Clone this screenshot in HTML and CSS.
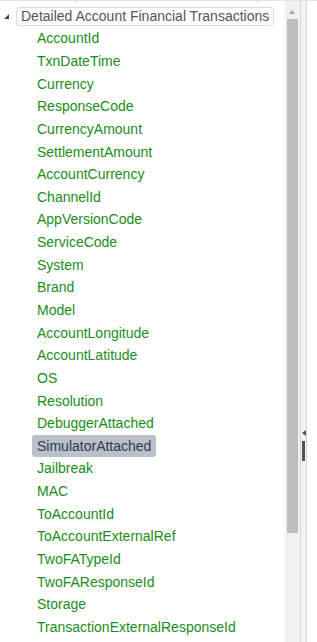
FILE: index.html
```html
<!DOCTYPE html>
<html>
<head>
    <meta http-equiv="Content-Type" content="text/html; charset=utf-8"/>
    <title>Fields</title>
    <link rel="stylesheet" href="styles.css">
</head>
<body>
<div class="frame">
    <div class="header"><span class="tick tick-a"></span><span class="tick tick-b"></span></div>
    <div class="main">
        <div class="tree">
            <div class="root">
                <span class="toggle"></span>
                <span class="root-label">Detailed Account Financial Transactions</span>
            </div>
            <ul class="fields">
                <li><span>AccountId</span></li>
                <li><span>TxnDateTime</span></li>
                <li><span>Currency</span></li>
                <li><span>ResponseCode</span></li>
                <li><span>CurrencyAmount</span></li>
                <li><span>SettlementAmount</span></li>
                <li><span>AccountCurrency</span></li>
                <li><span>ChannelId</span></li>
                <li><span>AppVersionCode</span></li>
                <li><span>ServiceCode</span></li>
                <li><span>System</span></li>
                <li><span>Brand</span></li>
                <li><span>Model</span></li>
                <li><span>AccountLongitude</span></li>
                <li><span>AccountLatitude</span></li>
                <li><span>OS</span></li>
                <li><span>Resolution</span></li>
                <li><span>DebuggerAttached</span></li>
                <li class="selected"><span>SimulatorAttached</span></li>
                <li><span>Jailbreak</span></li>
                <li><span>MAC</span></li>
                <li><span>ToAccountId</span></li>
                <li><span>ToAccountExternalRef</span></li>
                <li><span>TwoFATypeId</span></li>
                <li><span>TwoFAResponseId</span></li>
                <li><span>Storage</span></li>
                <li><span>TransactionExternalResponseId</span></li>
            </ul>
        </div>
        <div class="scrollbar">
            <div class="arrow-up"></div>
            <div class="thumb"></div>
        </div>
        <div class="splitter">
            <div class="collapse"></div>
            <div class="grip"></div>
        </div>
        <div class="rest"></div>
    </div>
</div>
</body>
</html>
```

FILE: styles.css
```css
html, body {
    margin: 0;
    padding: 0;
    background-color: #fff;
}
body {
    width: 317px;
    height: 642px;
    overflow: hidden;
    font-family: "Liberation Sans", Arial, sans-serif;
    font-size: 14px;
}
.frame {
    display: flex;
    flex-direction: column;
    height: 642px;
}
.header {
    position: relative;
    height: 1px;
    background-color: #e2e2e2;
    flex: none;
}
.tick {
    position: absolute;
    top: 0;
    width: 1px;
    height: 3px;
    background-color: #d8d8d8;
}
.tick-a {
    left: 75px;
}
.tick-b {
    left: 257px;
}
.main {
    display: flex;
    flex: 1;
    min-height: 0;
}
.tree {
    width: 285px;
    flex: none;
    padding-top: 4px;
}
.root {
    display: flex;
    align-items: center;
    height: 22px;
}
.toggle {
    width: 0;
    height: 0;
    margin-left: 4px;
    margin-right: 7px;
    border-left: 5px solid transparent;
    border-bottom: 5px solid #444;
    margin-top: 1px;
}
.root-label {
    height: 17px;
    line-height: 17px;
    padding: 0 4px;
    border: 1px solid #dcdcdc;
    border-radius: 3px;
    color: #555;
    white-space: nowrap;
}
.fields {
    list-style: none;
    margin: 0;
    padding: 0 0 0 32px;
}
.fields li {
    height: 22.65px;
    display: flex;
    align-items: center;
}
.fields span {
    padding: 0 5px;
    line-height: 22px;
    color: #1a8c1a;
    border-radius: 3px;
    white-space: nowrap;
}
.fields .selected span {
    background-color: #b9bfcb;
    color: #2f3a4a;
}
.scrollbar {
    width: 15px;
    flex: none;
    background-color: #f0f0f0;
    padding-top: 9px;
    box-sizing: border-box;
}
.arrow-up {
    width: 0;
    height: 0;
    margin: 0 auto 0 4px;
    border-left: 3.5px solid transparent;
    border-right: 3.5px solid transparent;
    border-bottom: 4px solid #a3a3a3;
}
.thumb {
    margin: 5px 2px 0 2px;
    height: 514px;
    background-color: #bdbdbd;
}
.splitter {
    width: 5px;
    flex: none;
    background-color: #f3f3f3;
    border-left: 1px solid #d6d6d6;
    border-right: 1px solid #d6d6d6;
    padding-top: 429px;
}
.collapse {
    width: 0;
    height: 0;
    margin-left: 1px;
    border-top: 3px solid transparent;
    border-bottom: 3px solid transparent;
    border-right: 4px solid #4a5565;
}
.grip {
    width: 3px;
    height: 20px;
    margin: 5px 0 0 1px;
    background-color: #4a5565;
}
.rest {
    flex: 1;
}
```
